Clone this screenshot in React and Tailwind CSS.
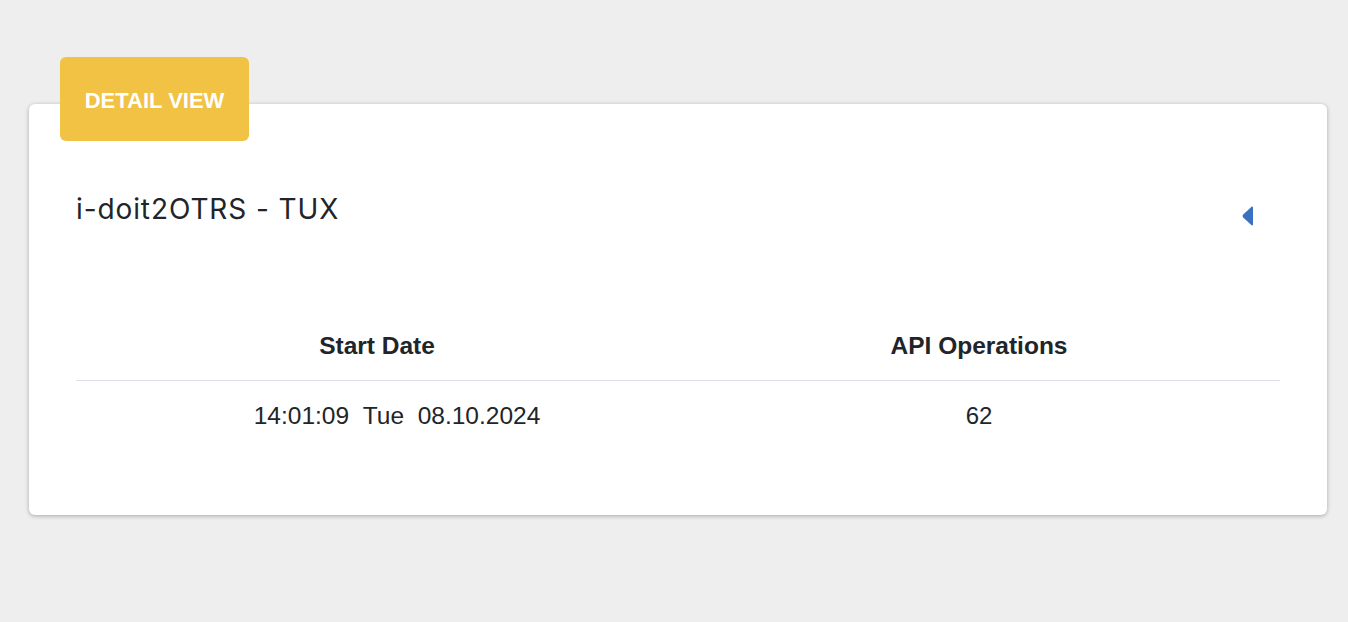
const App = () => {
  return (
    <div className="min-h-[622px] w-full bg-[#eeeeee] pt-[104px]">
      {/* Card */}
      <div className="relative ml-[29px] w-[1298px] rounded-[6px] bg-white px-[47px] pt-[89px] pb-[73px] shadow-[0_1px_4px_rgba(0,0,0,0.3)]">
        <div className="absolute -top-[47px] left-[31px] flex h-[84px] w-[189px] items-center justify-center rounded-[6px] bg-[#f1c243] pt-[3px]">
          <span className="text-[22px] font-bold text-white" style={{ fontFamily: '"Liberation Sans", Arial, sans-serif' }}>
            DETAIL VIEW
          </span>
        </div>

        <div className="flex items-start justify-between">
          <h2 className="text-[28px] leading-[32px] tracking-[0.9px] text-[#212529]" style={{ fontFamily: 'Inter, "Noto Sans", sans-serif' }}>
            i-doit2OTRS - TUX
          </h2>
          <svg className="mt-[13px] mr-[26px]" width="12" height="20" viewBox="0 0 12 20">
            <path d="M11 1.5 C11 0.6 10 0.3 9.3 0.9 L1.2 8.6 C0.4 9.4 0.4 10.6 1.2 11.4 L9.3 19.1 C10 19.7 11 19.4 11 18.5 Z" fill="#3a71c1" />
          </svg>
        </div>

        <table className="mt-[94px] w-full table-fixed border-collapse text-[#212529]" style={{ fontFamily: '"Liberation Sans", Arial, sans-serif' }}>
          <thead>
            <tr className="border-b border-[#dee2e6]">
              <th className="pt-[12px] pb-[20px] text-center text-[24.5px] leading-[28px] font-bold">Start Date</th>
              <th className="pt-[12px] pb-[20px] text-center text-[24.5px] leading-[28px] font-bold">API Operations</th>
            </tr>
          </thead>
          <tbody>
            <tr>
              <td className="pt-[21px] pb-[12px] pl-[40px] text-center text-[24.5px] leading-[28px]">
                14:01:09&nbsp;&nbsp;Tue&nbsp;&nbsp;08.10.2024
              </td>
              <td className="pt-[21px] pb-[12px] text-center text-[24px] leading-[28px]">62</td>
            </tr>
          </tbody>
        </table>
      </div>
    </div>
  );
};

export default App;
